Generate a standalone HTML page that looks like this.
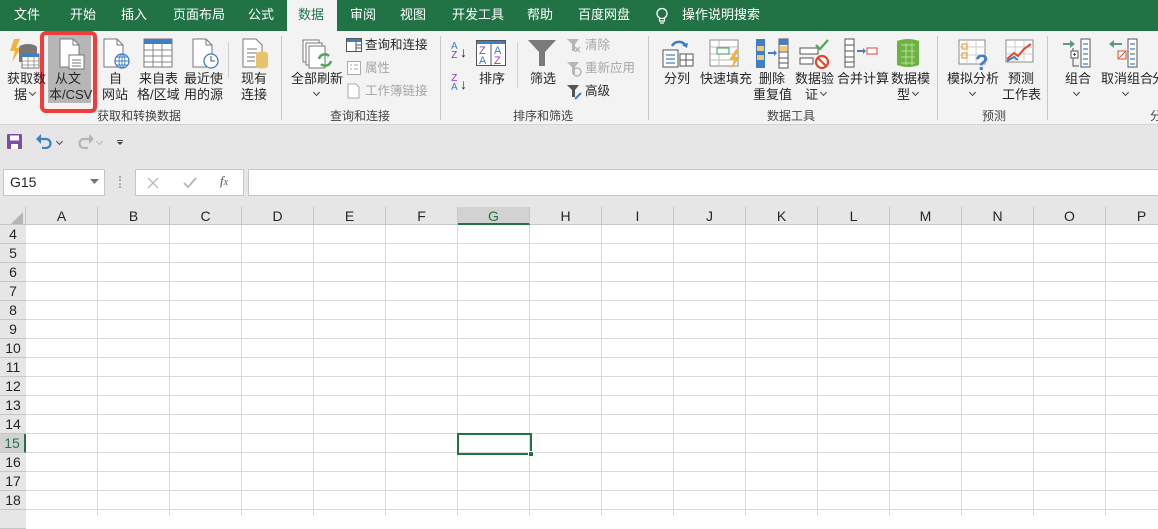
<!DOCTYPE html>
<html><head><meta charset="utf-8">
<style>
*{margin:0;padding:0;box-sizing:border-box}
body{width:1158px;height:516px;overflow:hidden;background:#fff;font-family:"Liberation Sans","Noto Sans CJK SC",sans-serif;position:relative;color:#262626}
.a{position:absolute}
.tab{position:absolute;top:0;height:31px;line-height:30px;color:#fff;font-size:13px}
.t{position:absolute;font-size:13px;line-height:16px;color:#262626;text-align:center;white-space:nowrap}
.g{color:#a6a6a6}
.gl{position:absolute;top:107px;font-size:12px;color:#444;white-space:nowrap}
.sep{position:absolute;top:36px;width:1px;height:84px;background:#c8c8c8}
.col{position:absolute;top:207px;height:18px;width:72px;text-align:center;font-size:14px;line-height:18px;color:#262626;border-right:1px solid #c6c6c6}
.row{position:absolute;left:0;width:26px;height:19px;text-align:center;font-size:14px;line-height:19px;color:#262626;border-bottom:1px solid #c6c6c6;background:#e6e6e6}
.cv{display:inline-block;width:5px;height:5px;border-right:1px solid #444;border-bottom:1px solid #444;transform:rotate(45deg);vertical-align:4px;margin-left:3px}
.cv.gr{border-color:#b5b5b5}
</style></head><body>
<!-- tab bar -->
<div class="a" style="left:0;top:0;width:1158px;height:31px;background:#217346"></div>
<div class="a" style="left:287px;top:0;width:50px;height:32px;background:#f3f3f3"></div>
<div class="tab" style="left:14px">文件</div>
<div class="tab" style="left:70px">开始</div>
<div class="tab" style="left:121px">插入</div>
<div class="tab" style="left:173px">页面布局</div>
<div class="tab" style="left:248px">公式</div>
<div class="tab" style="left:298px;color:#217346">数据</div>
<div class="tab" style="left:350px">审阅</div>
<div class="tab" style="left:400px">视图</div>
<div class="tab" style="left:452px">开发工具</div>
<div class="tab" style="left:527px">帮助</div>
<div class="tab" style="left:578px">百度网盘</div>
<svg class="a" style="left:655px;top:7px" width="14" height="18"><circle cx="7" cy="6.5" r="5" fill="none" stroke="#fff" stroke-width="1.3"/><path d="M4.5 11v3h5v-3M5 16h4" stroke="#fff" fill="none" stroke-width="1.2"/></svg>
<div class="tab" style="left:682px">操作说明搜索</div>

<!-- ribbon -->
<div class="a" style="left:0;top:31px;width:1158px;height:94px;background:#f3f3f3;border-bottom:1px solid #d4d4d4"></div>
<div class="a" style="left:48px;top:33px;width:43px;height:70px;background:#b6b6b6"></div>
<div class="a" style="left:40px;top:31px;width:57px;height:82px;border:4px solid #f23b3b;border-radius:6px"></div>

<svg class="a" style="left:8px;top:37px" width="32" height="34"><path d="M6 2 2 14h5l-3 11 9-14H8l4-9z" fill="#f0b43c"/><ellipse cx="20" cy="11" rx="9" ry="4" fill="#777"/><rect x="11" y="11" width="18" height="14" fill="#777"/><rect x="14" y="17" width="17" height="14" fill="#fff" stroke="#777"/><rect x="14" y="17" width="17" height="3" fill="#3f7fc4"/><path d="M14 24h17M14 28h17M20 20v11M26 20v11" stroke="#888" stroke-width=".8"/></svg>
<svg class="a" style="left:57px;top:37px" width="30" height="34"><path d="M3 2h13l6 6v22H3z" fill="#fff" stroke="#777"/><path d="M16 2v6h6" fill="none" stroke="#777"/><rect x="12" y="18" width="15" height="14" fill="#fff" stroke="#777"/><path d="M15 23h9M15 26h9M15 29h9" stroke="#777"/></svg>
<svg class="a" style="left:101px;top:37px" width="30" height="34"><path d="M3 2h13l6 6v22H3z" fill="#fff" stroke="#777"/><path d="M16 2v6h6" fill="none" stroke="#777"/><circle cx="21" cy="24" r="7" fill="#fff" stroke="#3f7fc4" stroke-width="1.3"/><path d="M14 24h14M21 17v14M16 20h10M16 28h10" stroke="#3f7fc4" stroke-width=".9"/><ellipse cx="21" cy="24" rx="3" ry="7" fill="none" stroke="#3f7fc4" stroke-width=".9"/></svg>
<svg class="a" style="left:143px;top:38px" width="30" height="30"><rect x="1" y="1" width="28" height="28" fill="#fff" stroke="#777"/><rect x="1" y="1" width="28" height="5" fill="#3f7fc4"/><path d="M1 12h28M1 18h28M1 24h28M10 6v23M19 6v23" stroke="#888"/></svg>
<svg class="a" style="left:190px;top:37px" width="30" height="34"><path d="M3 2h13l6 6v22H3z" fill="#fff" stroke="#777"/><path d="M16 2v6h6" fill="none" stroke="#777"/><circle cx="21" cy="24" r="7" fill="#fff" stroke="#3f7fc4" stroke-width="1.3"/><path d="M21 19v5h4" stroke="#555" fill="none"/></svg>
<div class="a" style="left:228px;top:42px;width:1px;height:36px;background:#d0d0d0"></div>
<svg class="a" style="left:240px;top:37px" width="30" height="34"><path d="M3 2h13l6 6v22H3z" fill="#fff" stroke="#777"/><path d="M7 12h10M7 16h10M7 20h8M7 24h8" stroke="#777"/><ellipse cx="22" cy="17" rx="6" ry="2.5" fill="#e8c36e"/><rect x="16" y="17" width="12" height="12" fill="#e8c36e"/><ellipse cx="22" cy="29" rx="6" ry="2.5" fill="#e8c36e"/></svg>
<div class="t" style="left:7px;top:71px">获取数</div>
<div class="t" style="left:14px;top:87px">据<span class="cv"></span></div>
<div class="t" style="left:55px;top:71px">从文</div>
<div class="t" style="left:49px;top:87px">本/CSV</div>
<div class="t" style="left:109px;top:71px">自</div>
<div class="t" style="left:102px;top:87px">网站</div>
<div class="t" style="left:139px;top:71px">来自表</div>
<div class="t" style="left:137px;top:87px">格/区域</div>
<div class="t" style="left:184px;top:71px">最近使</div>
<div class="t" style="left:184px;top:87px">用的源</div>
<div class="t" style="left:241px;top:71px">现有</div>
<div class="t" style="left:241px;top:87px">连接</div>
<div class="gl" style="left:97px">获取和转换数据</div>
<div class="sep" style="left:281px"></div>

<svg class="a" style="left:302px;top:39px" width="32" height="32"><rect x="1" y="1" width="16" height="22" fill="#fff" stroke="#777"/><rect x="4" y="4" width="16" height="22" fill="#fff" stroke="#777"/><rect x="7" y="7" width="16" height="22" fill="#fff" stroke="#777"/><path d="M17 20a6 6 0 0 1 10-3M29 22a6 6 0 0 1-10 3" stroke="#4ea65a" stroke-width="2.5" fill="none"/></svg>
<div class="t" style="left:291px;top:71px">全部刷新</div>
<div class="t" style="left:311px;top:87px"><span class="cv"></span></div>
<svg class="a" style="left:346px;top:38px" width="16" height="14"><rect x=".5" y=".5" width="15" height="13" fill="#fff" stroke="#555"/><rect x="1" y="1" width="14" height="3" fill="#3f7fc4"/><path d="M10 4v9M10 7h5M10 10h5" stroke="#555"/></svg>
<div class="t" style="left:365px;top:37px;font-size:12.5px">查询和连接</div>
<svg class="a" style="left:347px;top:61px" width="14" height="14"><rect x=".5" y=".5" width="13" height="13" fill="#fff" stroke="#aaa"/><path d="M3 4h2M7 4h4M3 8h2M7 8h4" stroke="#aaa"/></svg>
<div class="t g" style="left:365px;top:60px;font-size:12.5px">属性</div>
<svg class="a" style="left:347px;top:83px" width="14" height="16"><path d="M1 1h8l3 3v11H1z" fill="#fff" stroke="#aaa"/></svg>
<div class="t g" style="left:365px;top:83px;font-size:12.5px">工作簿链接</div>
<div class="gl" style="left:330px">查询和连接</div>
<div class="sep" style="left:440px"></div>

<div class="t" style="left:451px;top:42px;font-size:10px;line-height:9px;color:#3f7fc4">A<br><span style="color:#8a3fc4">Z</span></div>
<div class="t" style="left:460px;top:44px;font-size:14px">↓</div>
<div class="t" style="left:451px;top:74px;font-size:10px;line-height:9px;color:#8a3fc4">Z<br><span style="color:#3f7fc4">A</span></div>
<div class="t" style="left:460px;top:76px;font-size:14px">↓</div>
<svg class="a" style="left:476px;top:40px" width="30" height="26"><rect x=".5" y=".5" width="29" height="25" fill="#fff" stroke="#555"/><rect x="1" y="1" width="28" height="3" fill="#3f7fc4"/><path d="M15 4v22" stroke="#555"/><text x="3" y="14" font-size="11" fill="#8a3fc4" font-family="Liberation Sans">Z</text><text x="18" y="14" font-size="11" fill="#3f7fc4" font-family="Liberation Sans">A</text><text x="3" y="24" font-size="11" fill="#3f7fc4" font-family="Liberation Sans">A</text><text x="18" y="24" font-size="11" fill="#8a3fc4" font-family="Liberation Sans">Z</text></svg>
<div class="t" style="left:479px;top:71px">排序</div>
<div class="a" style="left:517px;top:42px;width:1px;height:46px;background:#d0d0d0"></div>
<svg class="a" style="left:527px;top:39px" width="30" height="28"><path d="M1 1h28L18 13v14h-6V13z" fill="#7a7a7a"/></svg>
<div class="t" style="left:530px;top:71px">筛选</div>
<svg class="a" style="left:566px;top:38px" width="16" height="16"><path d="M1 1h12L9 6v7H6V6z" fill="#b5b5b5"/><path d="M9 9l5 5M14 9l-5 5" stroke="#b5b5b5" stroke-width="1.5"/></svg>
<div class="t g" style="left:585px;top:37px;font-size:12.5px">清除</div>
<svg class="a" style="left:566px;top:61px" width="16" height="16"><path d="M1 1h12L9 6v7H6V6z" fill="#b5b5b5"/><circle cx="11" cy="11" r="4" fill="none" stroke="#b5b5b5" stroke-width="1.5"/></svg>
<div class="t g" style="left:585px;top:60px;font-size:12.5px">重新应用</div>
<svg class="a" style="left:566px;top:84px" width="16" height="16"><path d="M1 1h12L9 6v7H6V6z" fill="#555"/><path d="M9 15l6-6" stroke="#3f7fc4" stroke-width="2"/></svg>
<div class="t" style="left:585px;top:83px;font-size:12.5px">高级</div>
<div class="gl" style="left:513px">排序和筛选</div>
<div class="sep" style="left:648px"></div>

<svg class="a" style="left:662px;top:38px" width="32" height="30"><path d="M10 8a8 8 0 0 1 14 0" stroke="#3f7fc4" stroke-width="2.5" fill="none"/><path d="M20 7l5 3 1-5" fill="#3f7fc4"/><rect x="1" y="12" width="15" height="17" fill="#fff" stroke="#555"/><path d="M4 17h9M4 21h9M4 25h9" stroke="#3f7fc4" stroke-width="1.3"/><rect x="18" y="16" width="13" height="12" fill="#fff" stroke="#555"/><path d="M18 22h13M24 16v12" stroke="#555"/></svg>
<div class="t" style="left:664px;top:71px">分列</div>
<svg class="a" style="left:709px;top:39px" width="34" height="30"><rect x="1" y="1" width="28" height="26" fill="#fff" stroke="#888"/><path d="M1 8h28M1 15h28M1 21h28M10 1v26" stroke="#bbb"/><rect x="8" y="9" width="12" height="6" fill="#fff" stroke="#3a9a5a"/><path d="M27 10l-7 11h5l-3 9 9-12h-5l4-8z" fill="#f0b43c"/></svg>
<div class="t" style="left:700px;top:71px">快速填充</div>
<svg class="a" style="left:755px;top:38px" width="34" height="32"><rect x="1" y="1" width="9" height="29" fill="#3f7fc4"/><rect x="2" y="8" width="7" height="5" fill="#f0c87a"/><rect x="2" y="17" width="7" height="5" fill="#f0c87a"/><rect x="24" y="1" width="9" height="29" fill="#fff" stroke="#555"/><rect x="24" y="1" width="9" height="6" fill="#3f7fc4"/><rect x="25" y="8" width="7" height="5" fill="#f0c87a"/><path d="M24 14h9M24 20h9M24 25h9" stroke="#555"/><path d="M13 15h7" stroke="#3f7fc4" stroke-width="2"/><path d="M19 12l3 3-3 3z" fill="#3f7fc4"/></svg>
<div class="t" style="left:759px;top:71px">删除</div>
<div class="t" style="left:753px;top:87px">重复值</div>
<svg class="a" style="left:799px;top:38px" width="32" height="32"><rect x="1" y="10" width="18" height="6" fill="#fff" stroke="#555"/><rect x="1" y="20" width="13" height="6" fill="#fff" stroke="#555"/><path d="M17 7l4 4 8-9" stroke="#4ea65a" stroke-width="2.2" fill="none"/><circle cx="23" cy="24" r="6" fill="#fff" stroke="#e0492f" stroke-width="2.2"/><path d="M19 20l8 8" stroke="#e0492f" stroke-width="2.2"/></svg>
<div class="t" style="left:795px;top:71px">数据验</div>
<div class="t" style="left:805px;top:87px">证<span class="cv"></span></div>
<svg class="a" style="left:844px;top:38px" width="36" height="30"><rect x="1" y="1" width="9" height="28" fill="#fff" stroke="#555"/><path d="M1 7h9M1 13h9M1 19h9M1 24h9" stroke="#555"/><path d="M13 13h7" stroke="#3f7fc4" stroke-width="2"/><path d="M19 10l3 3-3 3z" fill="#3f7fc4"/><rect x="23" y="10" width="10" height="6" fill="#fff" stroke="#e0492f"/></svg>
<div class="t" style="left:837px;top:71px">合并计算</div>
<svg class="a" style="left:893px;top:37px" width="30" height="32"><path d="M4 4 Q15 0 26 4 V28 Q15 32 4 28Z" fill="#6cb33f"/><path d="M8 8h14M8 14h14M8 20h14M8 26h14M13 6v22M19 6v22" stroke="#b8dda0" stroke-width="1"/></svg>
<div class="t" style="left:891px;top:71px">数据模</div>
<div class="t" style="left:897px;top:87px">型<span class="cv"></span></div>
<div class="gl" style="left:767px">数据工具</div>
<div class="sep" style="left:937px"></div>

<svg class="a" style="left:958px;top:39px" width="32" height="32"><rect x="1" y="1" width="26" height="24" fill="#fff" stroke="#888"/><path d="M1 8h26M1 16h26M9 1v24M18 1v24" stroke="#ccc"/><rect x="4" y="5" width="5" height="5" fill="none" stroke="#f08a24"/><rect x="4" y="14" width="5" height="5" fill="none" stroke="#f08a24"/><text x="17" y="31" font-size="22" font-weight="bold" fill="#3f7fc4" font-family="Liberation Sans">?</text></svg>
<div class="t" style="left:947px;top:71px">模拟分析</div>
<div class="t" style="left:967px;top:87px"><span class="cv"></span></div>
<svg class="a" style="left:1005px;top:39px" width="30" height="28"><rect x="1" y="1" width="27" height="22" fill="#fff" stroke="#888"/><path d="M1 8h27M1 15h27M10 1v22M19 1v22" stroke="#ccc"/><path d="M2 20l7-6 4 3 6-7 7-5" stroke="#e0492f" stroke-width="2" fill="none"/><path d="M2 22l7-4 4 3" stroke="#3f7fc4" stroke-width="2" fill="none"/></svg>
<div class="t" style="left:1008px;top:71px">预测</div>
<div class="t" style="left:1002px;top:87px">工作表</div>
<div class="gl" style="left:982px">预测</div>
<div class="sep" style="left:1047px"></div>

<svg class="a" style="left:1061px;top:38px" width="32" height="30"><path d="M2 6h10" stroke="#5a9a8a" stroke-width="2"/><path d="M9 2l5 4-5 4z" fill="#5a9a8a"/><path d="M12 10v18h6" stroke="#555" fill="none"/><rect x="10" y="13" width="7" height="7" fill="#fff" stroke="#555"/><path d="M12 16.5h3M13.5 15v3" stroke="#555"/><rect x="20" y="1" width="9" height="28" fill="#fff" stroke="#555"/><path d="M22 6h5M22 11h5M22 16h5M22 21h5M22 26h5" stroke="#3f7fc4" stroke-width="1.3"/></svg>
<div class="t" style="left:1065px;top:71px">组合</div>
<div class="t" style="left:1071px;top:87px"><span class="cv"></span></div>
<svg class="a" style="left:1108px;top:38px" width="32" height="30"><path d="M4 6h10" stroke="#5a9a8a" stroke-width="2"/><path d="M6 2l-5 4 5 4z" fill="#5a9a8a"/><rect x="10" y="13" width="8" height="8" fill="#fff" stroke="#e0492f"/><path d="M11 20l6-6" stroke="#e0492f"/><rect x="20" y="1" width="9" height="28" fill="#fff" stroke="#555"/><path d="M22 6h5M22 11h5M22 16h5M22 21h5M22 26h5" stroke="#3f7fc4" stroke-width="1.3"/></svg>
<div class="t" style="left:1101px;top:71px">取消组合</div>
<div class="t" style="left:1120px;top:87px"><span class="cv"></span></div>
<div class="t" style="left:1152px;top:71px">分</div>
<div class="gl" style="left:1150px">分</div>

<div class="a" style="left:0;top:125px;width:1158px;height:82px;background:#e6e6e6"></div>
<svg class="a" style="left:7px;top:134px" width="15" height="15"><rect x="0" y="0" width="15" height="15" rx="1" fill="#7d4ea4"/><rect x="3" y="1.5" width="9" height="5" fill="#fff"/><rect x="4" y="10" width="7" height="5" fill="#fff"/></svg>
<svg class="a" style="left:35px;top:133px" width="20" height="16"><path d="M3 6h8a4.5 4.5 0 0 1 0 9H7" stroke="#3f7fc4" stroke-width="2.2" fill="none"/><path d="M1 6l5-5v10z" fill="#3f7fc4"/></svg>
<div class="a" style="left:54px;top:135px"><span class="cv"></span></div>
<svg class="a" style="left:75px;top:133px" width="20" height="16"><path d="M17 6H9a4.5 4.5 0 0 0 0 9h4" stroke="#b5b5b5" stroke-width="2.2" fill="none"/><path d="M19 6l-5-5v10z" fill="#b5b5b5"/></svg>
<div class="a" style="left:94px;top:135px"><span class="cv gr"></span></div>
<div class="a" style="left:117px;top:140px;width:6px;height:1px;background:#444"></div>
<svg class="a" style="left:117px;top:142px" width="6" height="4"><path d="M0 0h6L3 3z" fill="#444"/></svg>

<div class="a" style="left:3px;top:169px;width:102px;height:27px;background:#fff;border:1px solid #c6c6c6"></div>
<div class="a" style="left:10px;top:174px;font-size:14px;color:#262626">G15</div>
<svg class="a" style="left:90px;top:179px" width="9" height="5"><path d="M0 0h9L4.5 5z" fill="#777"/></svg>
<div class="a" style="left:119px;top:176px;width:2px;height:12px;border-left:2px dotted #aaa"></div>
<div class="a" style="left:135px;top:169px;width:109px;height:27px;background:#fff;border:1px solid #c6c6c6"></div>
<svg class="a" style="left:147px;top:177px" width="12" height="12"><path d="M1 1l10 10M11 1 1 11" stroke="#bbb" stroke-width="1.4"/></svg>
<svg class="a" style="left:183px;top:177px" width="14" height="12"><path d="M1 6l4 4 8-9" stroke="#bbb" stroke-width="2" fill="none"/></svg>
<div class="a" style="left:220px;top:173px;font-size:13px;font-style:italic;font-family:'Liberation Serif',serif;color:#555">f<span style="font-size:10px">x</span></div>
<div class="a" style="left:248px;top:169px;width:912px;height:27px;background:#fff;border:1px solid #c6c6c6"></div>

<div class="a" style="left:0;top:207px;width:1158px;height:18px;background:#e6e6e6;border-bottom:1px solid #c6c6c6"></div>
<div class="a" style="left:0;top:207px;width:26px;height:18px;border-right:1px solid #c6c6c6"></div>
<svg class="a" style="left:11px;top:212px" width="12" height="12"><path d="M12 0v12H0z" fill="#b5b5b5"/></svg>
<div class="col" style="left:26px">A</div>
<div class="col" style="left:98px">B</div>
<div class="col" style="left:170px">C</div>
<div class="col" style="left:242px">D</div>
<div class="col" style="left:314px">E</div>
<div class="col" style="left:386px">F</div>
<div class="col" style="left:458px;background:#d2d2d2;color:#217346;border-bottom:2px solid #217346">G</div>
<div class="col" style="left:530px">H</div>
<div class="col" style="left:602px">I</div>
<div class="col" style="left:674px">J</div>
<div class="col" style="left:746px">K</div>
<div class="col" style="left:818px">L</div>
<div class="col" style="left:890px">M</div>
<div class="col" style="left:962px">N</div>
<div class="col" style="left:1034px">O</div>
<div class="col" style="left:1106px">P</div>

<div class="a" style="left:26px;top:225px;width:1132px;height:291px;background-image:linear-gradient(to right,#d9d9d9 1px,transparent 1px),linear-gradient(to bottom,transparent 18px,#d9d9d9 18px);background-size:72px 19px,72px 19px;background-position:71px 0,0 0"></div>
<div class="a" style="left:0;top:225px;width:26px;height:291px;background:#e6e6e6;border-right:1px solid #c6c6c6"></div>
<div class="row" style="top:225px">4</div>
<div class="row" style="top:244px">5</div>
<div class="row" style="top:263px">6</div>
<div class="row" style="top:282px">7</div>
<div class="row" style="top:301px">8</div>
<div class="row" style="top:320px">9</div>
<div class="row" style="top:339px">10</div>
<div class="row" style="top:358px">11</div>
<div class="row" style="top:377px">12</div>
<div class="row" style="top:396px">13</div>
<div class="row" style="top:415px">14</div>
<div class="row" style="top:434px;background:#d2d2d2;color:#217346;border-right:2px solid #217346">15</div>
<div class="row" style="top:453px">16</div>
<div class="row" style="top:472px">17</div>
<div class="row" style="top:491px">18</div>
<div class="row" style="top:510px"></div>

<div class="a" style="left:457px;top:433px;width:75px;height:22px;border:2px solid #217346"></div>
<div class="a" style="left:528px;top:451px;width:6px;height:6px;background:#217346;border:1px solid #fff"></div>
</body></html>
